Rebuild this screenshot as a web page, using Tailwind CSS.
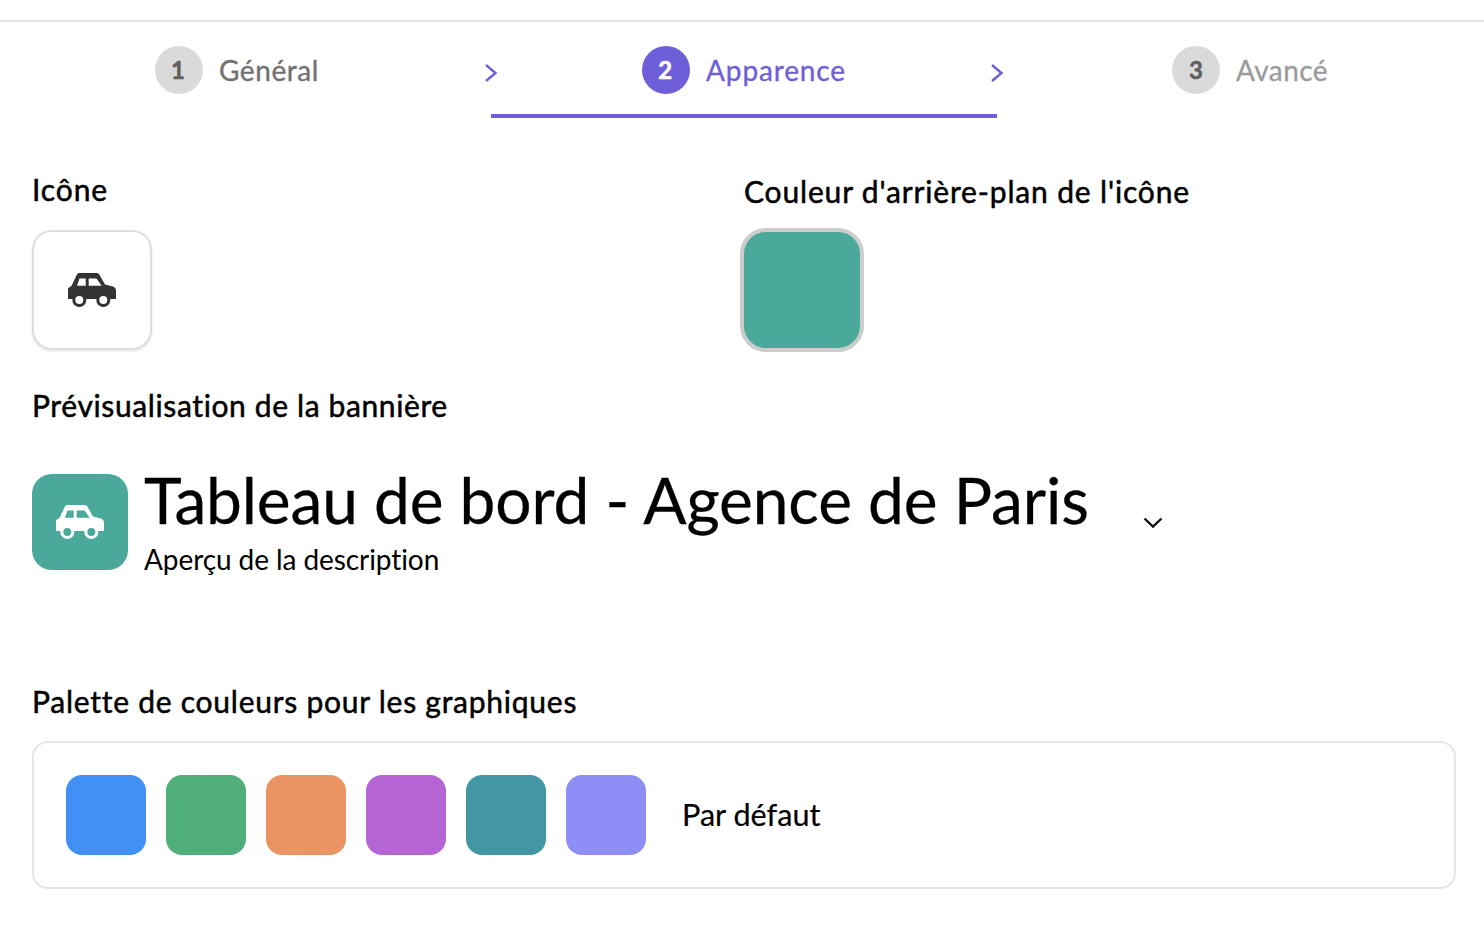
<!DOCTYPE html>
<html lang="fr">
<head>
    <meta charset="UTF-8">
    <title>Apparence</title>
    <script src="https://cdn.jsdelivr.net/npm/@tailwindcss/browser@4"></script>
</head>
<body class="bg-white font-['Lato',sans-serif] text-black overflow-hidden">
    <div class="pt-5">
        <!-- Etapes -->
        <div class="flex h-[98px] border-t-2 border-[#e2e4e8]">
            <div class="relative w-[491px] pr-[17px] pt-6 flex justify-center items-start gap-4">
                <span class="w-12 h-12 rounded-full bg-[#dadada] text-[#5f5f5f] flex items-center justify-center text-[24px] font-bold [-webkit-text-stroke:0.5px_#5f5f5f] pr-[2px]">1</span>
                <span class="h-12 flex items-center text-[28px] tracking-[0.6px] [-webkit-text-stroke:0.35px_#717171] text-[#717171]">Général</span>
                <svg class="absolute right-[-7px] top-[42px] w-[14px] h-[18px]" viewBox="0 0 14 18" fill="none" stroke="#6e5fd9" stroke-width="2.4"><path d="M2 1 11.5 9 2 17"/></svg>
            </div>
            <div class="relative w-[506px] pt-6 flex justify-center items-start gap-4 border-b-4 border-[#6e5fd9]">
                <span class="w-12 h-12 rounded-full bg-[#6e5fd9] text-white flex items-center justify-center text-[24px] font-bold [-webkit-text-stroke:0.5px_white] pr-[2px]">2</span>
                <span class="h-12 flex items-center text-[28px] tracking-[0.85px] [-webkit-text-stroke:0.35px_#6e5fd9] text-[#6e5fd9]">Apparence</span>
                <svg class="absolute right-[-7px] top-[42px] w-[14px] h-[18px]" viewBox="0 0 14 18" fill="none" stroke="#6e5fd9" stroke-width="2.4"><path d="M2 1 11.5 9 2 17"/></svg>
            </div>
            <div class="flex-1 pl-[19px] pt-6 flex justify-center items-start gap-4">
                <span class="w-12 h-12 rounded-full bg-[#dadada] text-[#5f5f5f] flex items-center justify-center text-[24px] font-bold [-webkit-text-stroke:0.5px_#5f5f5f]">3</span>
                <span class="h-12 flex items-center text-[28px] tracking-[0.45px] [-webkit-text-stroke:0.35px_#9b9b9b] text-[#9b9b9b]">Avancé</span>
            </div>
        </div>

        <div class="px-8">
            <!-- Icone et couleur -->
            <div class="flex h-[234px]">
                <div class="w-[712px] pt-[56px]">
                    <div class="h-[30px] leading-[30px] text-[30px] tracking-[0.9px] [-webkit-text-stroke:0.5px_black]">Icône</div>
                    <div class="mt-[26px] w-[120px] h-[120px] rounded-[20px] border-2 border-[#dedede] shadow-sm flex items-center justify-center">
                        <svg class="w-12 h-[34px] text-[#333]" viewBox="0 0 48 34" fill="currentColor">
                            <path fill-rule="evenodd" d="M11 0H28.5Q30 0 31 1L37 11.5 45 13.5Q48 14.5 48 18V26H0V16Q0 14.5 2 14L3.7 12.5 8.7 2Q9.5 0 11 0ZM11.5 5.5 9 12.7H17.7V5.5ZM20.7 5.5V12.7H33.7L28.5 5.5Z"/>
                            <circle cx="11.3" cy="27" r="7"/><circle cx="35.3" cy="27" r="7"/>
                            <circle cx="11.3" cy="27" r="4" fill="#fff"/><circle cx="35.3" cy="27" r="4" fill="#fff"/>
                        </svg>
                    </div>
                </div>
                <div class="pt-[58px]">
                    <div class="h-[30px] leading-[30px] text-[30px] tracking-[0.84px] [-webkit-text-stroke:0.5px_black]">Couleur d'arrière-plan de l'icône</div>
                    <div class="mt-[22px] -ml-1 w-[124px] h-[124px] rounded-[26px] border-4 border-[#cccccc] bg-[#4aa99a]"></div>
                </div>
            </div>

            <!-- Banniere -->
            <div class="mt-[38px] h-[30px] leading-[30px] text-[30px] tracking-[0.62px] [-webkit-text-stroke:0.5px_black]">Prévisualisation de la bannière</div>
            <div class="mt-[54px] flex items-start gap-4 h-[96px]">
                <div class="w-24 h-24 rounded-[20px] bg-[#4aa99a] flex items-center justify-center">
                    <svg class="w-12 h-[34px] text-white" viewBox="0 0 48 34" fill="currentColor">
                        <path fill-rule="evenodd" d="M11 0H28.5Q30 0 31 1L37 11.5 45 13.5Q48 14.5 48 18V26H0V16Q0 14.5 2 14L3.7 12.5 8.7 2Q9.5 0 11 0ZM11.5 5.5 9 12.7H17.7V5.5ZM20.7 5.5V12.7H33.7L28.5 5.5Z"/>
                        <circle cx="11.3" cy="27" r="7"/><circle cx="35.3" cy="27" r="7"/>
                        <circle cx="11.3" cy="27" r="4" fill="#4aa99a"/><circle cx="35.3" cy="27" r="4" fill="#4aa99a"/>
                    </svg>
                </div>
                <div class="w-[984px]">
                    <div class="-mt-[8px] h-[68px] leading-[68px] text-[64px] tracking-[-0.12px] [-webkit-text-stroke:0.3px_black]">Tableau de bord - Agence de Paris</div>
                    <div class="mt-[7px] h-9 leading-9 text-[28px] tracking-[-0.08px]">Aperçu de la description</div>
                </div>
                <svg class="mt-[43px] ml-[-1px] w-[20px] h-[12px]" viewBox="0 0 20 12" fill="none" stroke="#111" stroke-width="2.4"><path d="M1.5 1.5 10 9.5 18.5 1.5"/></svg>
            </div>

            <!-- Palette -->
            <div class="mt-[116px] h-[30px] leading-[30px] text-[30px] tracking-[0.75px] [-webkit-text-stroke:0.5px_black]">Palette de couleurs pour les graphiques</div>
            <div class="mt-[25px] p-8 w-[1424px] h-[148px] rounded-2xl border-2 border-[#e2e6ea] flex items-center gap-5">
                <span class="w-20 h-20 rounded-2xl bg-[#4090f6]"></span>
                <span class="w-20 h-20 rounded-2xl bg-[#50ae7b]"></span>
                <span class="w-20 h-20 rounded-2xl bg-[#ea9363]"></span>
                <span class="w-20 h-20 rounded-2xl bg-[#b564d3]"></span>
                <span class="w-20 h-20 rounded-2xl bg-[#4397a5]"></span>
                <span class="w-20 h-20 rounded-2xl bg-[#8f8ef7]"></span>
                <span class="ml-4 text-[30.6px] [-webkit-text-stroke:0.2px_black]">Par défaut</span>
            </div>
        </div>
    </div>
</body>
</html>
